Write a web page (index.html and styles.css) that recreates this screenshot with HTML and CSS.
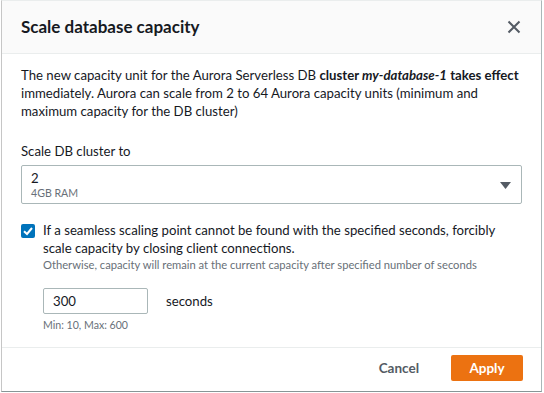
FILE: index.html
```html
<!DOCTYPE html>
<html>
<head>
<meta charset="utf-8">
<link rel="stylesheet" href="styles.css">
</head>
<body>
<div class="modal">
  <div class="header">
    <h2 class="title">Scale database capacity</h2>
    <button class="close" aria-label="Close">
      <svg width="16" height="16" viewBox="0 0 16 16"><path d="M2.5 2.5 L13.5 13.5 M13.5 2.5 L2.5 13.5" stroke="#545b64" stroke-width="2" fill="none"/></svg>
    </button>
  </div>
  <div class="body">
    <p class="intro">The new capacity unit for the Aurora Serverless DB <span class="strong">cluster <i>my-database-1</i> takes effect</span> immediately. Aurora can scale from 2 to 64 Aurora capacity units (minimum and maximum capacity for the DB cluster)</p>
    <div class="field">
      <div class="label">Scale DB cluster to</div>
      <div class="select">
        <div class="select-text">
          <div class="select-value">2</div>
          <div class="select-desc">4GB RAM</div>
        </div>
        <svg class="caret" width="11" height="7" viewBox="0 0 11 7"><path d="M0 0 H11 L5.5 7 Z" fill="#545b64"/></svg>
      </div>
    </div>
    <div class="check-row">
      <span class="checkbox">
        <svg width="14" height="14" viewBox="0 0 14 14"><rect x="0" y="0" width="14" height="14" rx="2" fill="#0073bb"/><path d="M3 7.2 L6 10 L11 4" stroke="#fff" stroke-width="2" fill="none"/></svg>
      </span>
      <div class="check-text">
        <div class="check-label">If a seamless scaling point cannot be found with the specified seconds, forcibly scale capacity by closing client connections.</div>
        <div class="check-desc">Otherwise, capacity will remain at the current capacity after specified number of seconds</div>
      </div>
    </div>
    <div class="seconds">
      <div class="seconds-row">
        <div class="input">300</div>
        <span class="unit">seconds</span>
      </div>
      <div class="hint">Min: 10, Max: 600</div>
    </div>
  </div>
  <div class="footer">
    <button class="btn-link">Cancel</button>
    <button class="btn-primary">Apply</button>
  </div>
</div>
</body>
</html>
```
FILE: styles.css
```css
html, body {
  margin: 0;
  padding: 0;
  background: #ffffff;
}
body {
  font-family: Lato, "Open Sans", sans-serif;
  color: #16191f;
  padding: 0 2px 1px 1px;
}
.modal {
  width: 541px;
  height: 392px;
  border: 1px solid #c6c6c6;
  border-top-color: #eaeded;
  border-right-color: #aab7b8;
  border-bottom-color: #879596;
  box-sizing: border-box;
  display: flex;
  flex-direction: column;
  background: #fff;
}
.header {
  height: 53px;
  box-sizing: border-box;
  background: #fafafa;
  border-bottom: 1px solid #eaeded;
  display: flex;
  align-items: center;
  justify-content: space-between;
  padding: 0 19px 1px;
  flex-shrink: 0;
}
.title {
  margin: 0;
  font-size: 17px;
  font-weight: 700;
}
.close {
  border: 0;
  background: none;
  padding: 0;
  width: 16px;
  height: 16px;
  display: flex;
}
.body {
  flex: 1;
  padding: 12px 19px 0;
}
.intro {
  margin: 0;
  font-size: 13.2px;
  line-height: 18px;
}
.strong { font-weight: 700; }
.field { margin-top: 22px; }
.label {
  font-size: 13.2px;
  line-height: 18px;
  margin-bottom: 5px;
}
.select {
  border: 1px solid #aab7b8;
  border-radius: 2px;
  height: 39px;
  box-sizing: border-box;
  display: flex;
  align-items: center;
  justify-content: space-between;
  padding: 2px 10px 0 9px;
}
.select-value { font-size: 13.2px; line-height: 16px; }
.select-desc { font-size: 10.6px; line-height: 15px; color: #687078; }
.check-row {
  margin-top: 17px;
  display: flex;
  gap: 8px;
}
.checkbox { display: flex; padding-top: 3px; }
.check-label { font-size: 13.2px; line-height: 18px; }
.check-desc { font-size: 11.2px; line-height: 15px; color: #687078; }
.seconds { margin: 16px 0 0 22px; }
.seconds-row { display: flex; align-items: center; gap: 18px; }
.input {
  width: 105px;
  height: 26px;
  box-sizing: border-box;
  border: 1px solid #aab7b8;
  border-radius: 2px;
  font-size: 13.2px;
  line-height: 24px;
  padding-left: 9px;
}
.unit { font-size: 13.2px; }
.hint { font-size: 10.6px; line-height: 14px; color: #687078; margin-top: 4px; }
.footer {
  height: 44px;
  box-sizing: border-box;
  border-top: 1px solid #eaeded;
  display: flex;
  align-items: center;
  justify-content: flex-end;
  padding: 0 18px 3px 0;
  gap: 32px;
  flex-shrink: 0;
}
.btn-link {
  border: 0;
  background: none;
  font-family: inherit;
  font-weight: 700;
  font-size: 13.5px;
  color: #545b64;
  padding: 0;
}
.btn-primary {
  border: 0;
  background: #ec7211;
  color: #fff;
  font-family: inherit;
  font-weight: 700;
  font-size: 13.5px;
  width: 72px;
  height: 26px;
  border-radius: 2px;
  padding: 0;
}
```
